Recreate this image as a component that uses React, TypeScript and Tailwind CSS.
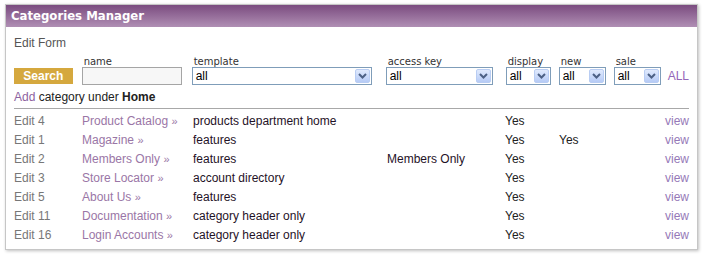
import React from "react";

type Row = {
  id: number;
  name: string;
  template: string;
  access: string;
  display: string;
  isNew: string;
};

const rows: Row[] = [
  { id: 4, name: "Product Catalog", template: "products department home", access: "", display: "Yes", isNew: "" },
  { id: 1, name: "Magazine", template: "features", access: "", display: "Yes", isNew: "Yes" },
  { id: 2, name: "Members Only", template: "features", access: "Members Only", display: "Yes", isNew: "" },
  { id: 3, name: "Store Locator", template: "account directory", access: "", display: "Yes", isNew: "" },
  { id: 5, name: "About Us", template: "features", access: "", display: "Yes", isNew: "" },
  { id: 11, name: "Documentation", template: "category header only", access: "", display: "Yes", isNew: "" },
  { id: 16, name: "Login Accounts", template: "category header only", access: "", display: "Yes", isNew: "" },
];

// XP style select box
const FakeSelect = ({ width }: { width: string }) => (
  <div className={`${width} h-[18px] border border-[#7f9db9] bg-white flex items-center justify-between`}>
    <span className="pl-[3px] text-[12px] leading-none text-black">all</span>
    <span className="w-[15px] h-[14px] mr-[1px] rounded-[2px] border border-[#b9cdf3] bg-gradient-to-b from-[#e0eafd] to-[#b6cbf6] flex items-center justify-center">
      <svg width="9" height="6" viewBox="0 0 9 6">
        <path d="M1 1 L4.5 4.5 L8 1" fill="none" stroke="#4d6185" strokeWidth="2" />
      </svg>
    </span>
  </div>
);

const Field = ({ label, children }: { label: string; children: React.ReactNode }) => (
  <div className="flex flex-col">
    <span className="h-[10px] text-[10px] leading-[10px] text-[#333] pl-[2px]" style={{ fontFamily: "Verdana, 'DejaVu Sans', sans-serif" }}>
      {label}
    </span>
    <div>{children}</div>
  </div>
);

const App = () => {
  return (
    <div className="w-[704px] h-[258px] bg-white pt-[4px] pl-[5px]" style={{ fontFamily: "'Liberation Sans', Arial, sans-serif" }}>
      <div className="w-[693px] h-[246px] border border-[#c6c6c6] bg-white shadow-[1px_1px_3px_rgba(0,0,0,0.25)]">
        <div
          className="h-[22px] bg-gradient-to-b from-[#7b4c80] to-[#b08fb4] pl-[5px] flex items-center text-white font-bold text-[13px]"
          style={{ fontFamily: "'DejaVu Sans Condensed', 'DejaVu Sans', Verdana, sans-serif" }}
        >
          Categories Manager
        </div>

        <div className="px-[8px] pt-[8px]">
          <div className="text-[12px] leading-[16px] text-[#555]">Edit Form</div>

          <div className="flex items-end mt-[6px]">
            <button className="w-[59px] h-[16px] mb-[1px] bg-[#d5a83e] text-white font-bold text-[12px] leading-[16px] text-center">
              Search
            </button>
            <div className="ml-[9px]">
              <Field label="name">
                <div className="w-[100px] h-[18px] border border-[#a5a5a5] bg-[#f7f7f7]" />
              </Field>
            </div>
            <div className="ml-[10px]">
              <Field label="template">
                <FakeSelect width="w-[180px]" />
              </Field>
            </div>
            <div className="ml-[14px]">
              <Field label="access key">
                <FakeSelect width="w-[107px]" />
              </Field>
            </div>
            <div className="ml-[13px]">
              <Field label="display">
                <FakeSelect width="w-[45px]" />
              </Field>
            </div>
            <div className="ml-[8px]">
              <Field label="new">
                <FakeSelect width="w-[47px]" />
              </Field>
            </div>
            <div className="ml-[8px]">
              <Field label="sale">
                <FakeSelect width="w-[47px]" />
              </Field>
            </div>
            <span className="ml-[7px] mb-[1px] text-[12px] leading-[16px] text-[#9466b8]">ALL</span>
          </div>

          <div className="mt-[4px] text-[12px] leading-[16px] text-[#222]">
            <span className="text-[#8d62a0]">Add</span> category under <b>Home</b>
          </div>

          <div className="mt-[3px] h-px bg-[#a8a8a8]" />

          <div className="pt-[3px]">
            {rows.map((r) => (
              <div key={r.id} className="grid grid-cols-[68px_111px_194px_118px_54px_1fr_auto] h-[19px] items-center text-[12px] leading-[19px] text-[#222]">
                <span className="text-[#777]">Edit {r.id}</span>
                <span className="text-[#9a76a6]">
                  {r.name} <span className="text-[11px]">»</span>
                </span>
                <span className="text-[#1f1227]">{r.template}</span>
                <span className="text-[#1f1227]">{r.access}</span>
                <span>{r.display}</span>
                <span>{r.isNew}</span>
                <span className="text-[#9679b8]">view</span>
              </div>
            ))}
          </div>
        </div>
      </div>
    </div>
  );
};

export default App;
